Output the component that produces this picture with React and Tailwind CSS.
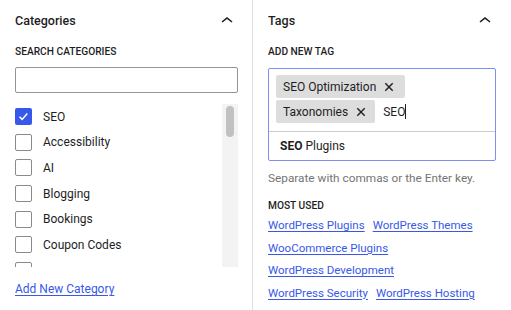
import React from "react";

const Chevron = () => (
  <svg width="24" height="24" viewBox="0 0 24 24" className="block">
    <path d="M6.5 12.4L12 8l5.5 4.4-.9 1.2L12 10l-4.5 3.6-1-1.2z" fill="#1e1e1e" />
  </svg>
);

const XIcon = () => (
  <svg width="10" height="10" viewBox="0 0 10 10" className="block">
    <path d="M1.3 1.3L8.7 8.7M8.7 1.3L1.3 8.7" stroke="#1e1e1e" strokeWidth="1.4" />
  </svg>
);

const Check = () => (
  <svg width="17" height="17" viewBox="0 0 17 17" className="block">
    <path d="M4.5 8.8l2.6 2.6 5.2-6" stroke="white" strokeWidth="1.5" fill="none" />
  </svg>
);

const cats = ["SEO", "Accessibility", "AI", "Blogging", "Bookings", "Coupon Codes", ""];

const Chip = ({ label, pr }) => (
  <div className={"flex h-[23px] items-center bg-[#dddddd] rounded-[2px] pl-[7px] gap-[8px] text-[12px] leading-[16px] text-[#1e1e1e] " + pr}>
    <span>{label}</span>
    <XIcon />
  </div>
);

export default function App() {
  const font = { fontFamily: "Roboto, 'Noto Sans', sans-serif" };
  return (
    <div className="flex w-[511px] h-[310px] bg-white overflow-hidden text-[#1e1e1e]" style={font}>
      {/* Left panel */}
      <div className="w-[253px] shrink-0 border-r border-[#e0e0e0] pl-[15px] pr-[14px] flex flex-col">
        <div className="h-[40px] pt-[1px] flex items-center justify-between">
          <span className="text-[12.5px] leading-[16px] font-medium">Categories</span>
          <div className="mr-[-1px]"><Chevron /></div>
        </div>
        <div className="mt-[4px] h-[16px] flex items-center text-[10.2px] leading-[16px] font-medium uppercase">Search Categories</div>
        <div className="mt-[7px] h-[26px] border border-[#949494] rounded-[2px]"></div>
        <div className="mt-[11px] h-[163px] flex overflow-hidden">
          <div className="flex-1 flex flex-col">
            {cats.map((c, i) => (
              <div key={i} className="h-[25.6px] shrink-0 flex items-center gap-[11px]">
                {i === 0 ? (
                  <div className="w-[17px] h-[17px] rounded-[2px] bg-[#3858e9] shrink-0">
                    <Check />
                  </div>
                ) : (
                  <div className="w-[17px] h-[17px] rounded-[2px] border border-[#8a8a8a] bg-white shrink-0"></div>
                )}
                {c && <span className="text-[12px] leading-[16px]">{c}</span>}
              </div>
            ))}
          </div>
          <div className="w-[16px] h-full bg-[#f3f3f3] flex justify-center pt-[2px]">
            <div className="w-[8px] h-[31px] rounded-full bg-[#c1c1c1]"></div>
          </div>
        </div>
        <div className="mt-[14px] h-[16px] flex items-center">
          <a className="text-[12px] leading-[16px] text-[#3858e9] underline underline-offset-2 whitespace-nowrap">Add New Category</a>
        </div>
      </div>

      {/* Right panel */}
      <div className="flex-1 pl-[15px] pr-[15px] flex flex-col">
        <div className="h-[40px] pt-[1px] flex items-center justify-between">
          <span className="text-[12.5px] leading-[16px] font-medium">Tags</span>
          <div className="mr-[-1px]"><Chevron /></div>
        </div>
        <div className="mt-[4px] h-[16px] flex items-center text-[10.2px] leading-[16px] font-medium uppercase">Add New Tag</div>
        <div className="mt-[8px] border border-[#7d8ff0] rounded-[2px] flex flex-col">
          <div className="px-[7px] pt-[6px] pb-[8px] flex flex-col gap-[2px] items-start">
            <Chip label="SEO Optimization" pr="pr-[11px]" />
            <div className="flex items-center">
              <Chip label="Taxonomies" pr="pr-[9px]" />
              <div className="ml-[8px] flex items-center text-[12px] leading-[16px]">
                <span>SEO</span>
                <span className="w-[1px] h-[15px] bg-[#1e1e1e]"></span>
              </div>
            </div>
          </div>
          <div className="h-[1px] bg-[#cccccc]"></div>
          <div className="h-[28px] flex items-center pl-[11px] text-[12px] leading-[16px]">
            <span className="font-bold">SEO</span>
            <span>&nbsp;Plugins</span>
          </div>
        </div>
        <div className="mt-[9px] h-[16px] flex items-center text-[11.8px] leading-[16px] text-[#757575] whitespace-nowrap">Separate with commas or the Enter key.</div>
        <div className="mt-[12px] h-[16px] flex items-center text-[10.2px] leading-[16px] font-medium uppercase">Most Used</div>
        <div className="flex flex-col text-[11.5px] leading-[16px] text-[#3858e9] whitespace-nowrap">
          <div className="h-[22.5px] flex items-center gap-[8px]">
            <a className="underline underline-offset-2">WordPress Plugins</a>
            <a className="underline underline-offset-2">WordPress Themes</a>
          </div>
          <div className="h-[22.5px] flex items-center">
            <a className="underline underline-offset-2">WooCommerce Plugins</a>
          </div>
          <div className="h-[22.5px] flex items-center">
            <a className="underline underline-offset-2">WordPress Development</a>
          </div>
          <div className="h-[22.5px] flex items-center gap-[8px]">
            <a className="underline underline-offset-2">WordPress Security</a>
            <a className="underline underline-offset-2">WordPress Hosting</a>
          </div>
        </div>
      </div>
    </div>
  );
}
